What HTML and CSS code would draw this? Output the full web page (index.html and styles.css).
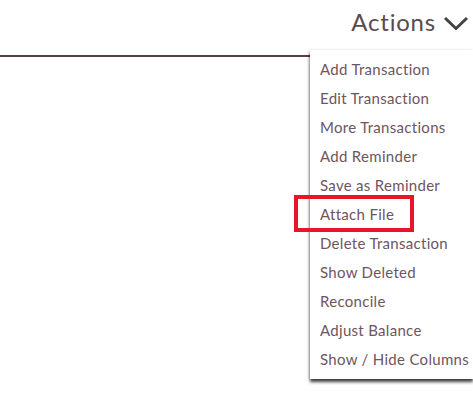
FILE: index.html
```html
<!DOCTYPE html>
<html>
<head>
<meta charset="utf-8">
<link rel="stylesheet" href="styles.css">
</head>
<body>
<div class="page">
  <header class="topbar">
    <button class="actions-btn">
      <span class="actions-label">Actions</span>
      <svg class="chevron" width="26" height="15" viewBox="0 0 26 15"><path d="M2 2 L13 12.5 L24 2" fill="none" stroke="#444" stroke-width="3"/></svg>
    </button>
  </header>
  <ul class="menu">
    <li>Add Transaction</li>
    <li>Edit Transaction</li>
    <li>More Transactions</li>
    <li>Add Reminder</li>
    <li>Save as Reminder</li>
    <li class="highlight">Attach File</li>
    <li>Delete Transaction</li>
    <li>Show Deleted</li>
    <li>Reconcile</li>
    <li>Adjust Balance</li>
    <li>Show / Hide Columns</li>
  </ul>
</div>
</body>
</html>
```
FILE: styles.css
```css
html, body {
  margin: 0;
  padding: 0;
  background: #fff;
}
.page {
  position: relative;
  width: 473px;
  height: 398px;
  overflow: hidden;
  font-family: Lato, "Open Sans", sans-serif;
}
.topbar {
  height: 55px;
  border-bottom: 2px solid #5b3b48;
  display: flex;
  justify-content: flex-end;
  align-items: flex-start;
}
.actions-btn {
  display: flex;
  align-items: center;
  gap: 7px;
  background: none;
  border: 0;
  padding: 6px 4px 0 0;
  font-family: inherit;
  cursor: pointer;
}
.actions-label {
  font-size: 24px;
  color: #5a4a50;
  line-height: 32px;
  letter-spacing: 0.8px;
}
.chevron {
  display: block;
  margin-top: 2px;
}
.menu {
  position: absolute;
  top: 50px;
  left: 310px;
  right: 0;
  margin: 0;
  padding: 5px 0;
  list-style: none;
  background: #fff;
  box-shadow: -1px 0 3px rgba(0,0,0,0.12), 0 3px 3px rgba(0,0,0,0.75);
}
.menu li {
  position: relative;
  height: 29px;
  line-height: 29px;
  padding-left: 10px;
  font-size: 15px;
  letter-spacing: 0.3px;
  color: #6e5560;
  white-space: nowrap;
}
.menu li.highlight::after {
  content: "";
  position: absolute;
  left: -16px;
  top: -5px;
  width: 112px;
  height: 29px;
  border: 4px solid #e8142a;
}
```
